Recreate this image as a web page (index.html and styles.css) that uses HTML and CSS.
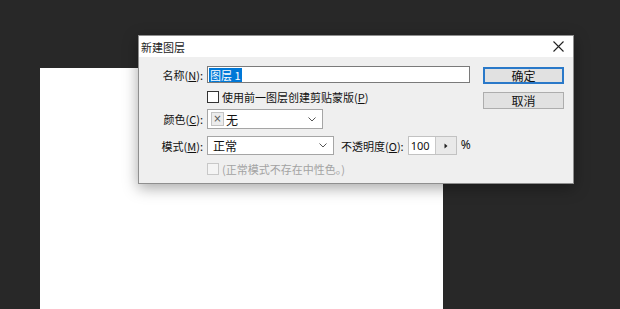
FILE: index.html
```html
<!DOCTYPE html>
<html lang="zh-CN">
<head>
  <meta charset="UTF-8">
  <meta name="viewport" content="width=device-width, initial-scale=1.0">
  <title>新建图层</title>
  <link rel="stylesheet" href="styles.css">
</head>
<body>
  <div class="workspace">
    <div class="canvas"></div>
  </div>

  <div class="dialog">
    <div class="title-bar">
      <span class="title">新建图层</span>
      <svg class="close" width="11" height="11" viewBox="0 0 11 11">
        <path d="M0.5 0.5 L10.5 10.5 M10.5 0.5 L0.5 10.5" stroke="#222" stroke-width="1.1" fill="none"/>
      </svg>
    </div>
    <div class="dialog-body">
      <div class="form">
        <div class="row row-name">
          <label class="label">名称(<u>N</u>):</label>
          <div class="text-input"><span class="selected">图层 1</span></div>
        </div>
        <div class="row row-clip">
          <span class="label"></span>
          <div class="check"><span class="box"></span>使用前一图层创建剪贴蒙版(<u>P</u>)</div>
        </div>
        <div class="row row-color">
          <label class="label">颜色(<u>C</u>):</label>
          <div class="select select-color">
            <span class="swatch">×</span><span class="value">无</span>
            <svg class="chevron" width="8" height="5" viewBox="0 0 8 5"><path d="M0.5 0.5 L4 4 L7.5 0.5" stroke="#555" fill="none"/></svg>
          </div>
        </div>
        <div class="row row-mode">
          <label class="label">模式(<u>M</u>):</label>
          <div class="select select-mode">
            <span class="value">正常</span>
            <svg class="chevron" width="8" height="5" viewBox="0 0 8 5"><path d="M0.5 0.5 L4 4 L7.5 0.5" stroke="#555" fill="none"/></svg>
          </div>
          <label class="opacity-label">不透明度(<u>O</u>):</label>
          <div class="number">
            <span class="number-value">100</span>
            <span class="number-arrow">
              <svg width="4" height="6" viewBox="0 0 4 6"><path d="M0.5 0.5 L3.5 3 L0.5 5.5 Z" fill="#222"/></svg>
            </span>
          </div>
          <span class="percent">%</span>
        </div>
        <div class="row row-neutral">
          <span class="label"></span>
          <div class="check disabled"><span class="box"></span>(正常模式不存在中性色。)</div>
        </div>
      </div>
      <div class="buttons">
        <button class="btn btn-default">确定</button>
        <button class="btn">取消</button>
      </div>
    </div>
  </div>
</body>
</html>
```

FILE: styles.css
```css
body {
  margin: 0;
  width: 620px;
  height: 309px;
  overflow: hidden;
  background: #282828;
  font-family: "Noto Sans CJK SC", "Noto Sans", sans-serif;
  font-size: 11px;
  color: #111;
  position: relative;
}
.workspace {
  padding: 68px 0 0 40px;
}
.canvas {
  width: 403px;
  height: 241px;
  background: #fff;
}

/* dialog floats over the document */
.dialog {
  position: absolute;
  left: 138px;
  top: 35px;
  width: 434px;
  border: 1px solid #8f8f8f;
  background: #efefef;
  box-shadow: 0 4px 14px rgba(0, 0, 0, 0.35);
}
.title-bar {
  height: 21px;
  background: #fff;
  display: flex;
  align-items: center;
  justify-content: space-between;
  padding: 0 9px 0 2px;
}
.title {
  font-size: 11px;
  color: #222;
}
.close {
  display: block;
}
.dialog-body {
  display: flex;
  height: 126px;
  box-sizing: border-box;
  padding-top: 9px;
}
.form {
  flex: 1;
  display: flex;
  flex-direction: column;
}
.row {
  display: flex;
  align-items: center;
}
.label {
  width: 64px;
  padding-right: 4px;
  text-align: right;
  white-space: nowrap;
  flex-shrink: 0;
}
u {
  text-decoration: underline;
  text-underline-offset: 1px;
}
.row-name { height: 17px; }
.row-clip { height: 18px; margin-top: 5px; }
.row-color { height: 20px; margin-top: 3px; }
.row-mode { height: 19px; margin-top: 7px; }
.row-neutral { height: 17px; margin-top: 5px; }

.text-input {
  width: 260px;
  height: 15px;
  border: 1px solid #7a7a7a;
  background: #fff;
  display: flex;
  align-items: center;
  padding-left: 1px;
}
.selected {
  background: #0078d7;
  color: #fff;
  line-height: 14px;
  padding: 0 1px;
}
.check {
  display: flex;
  align-items: center;
  white-space: nowrap;
}
.box {
  width: 10px;
  height: 10px;
  border: 1px solid #333;
  background: #fff;
  margin-right: 3px;
}
.check.disabled {
  color: #a3a3a3;
}
.check.disabled .box {
  border-color: #c8c8c8;
  background: #f4f4f4;
}
.select {
  height: 100%;
  box-sizing: border-box;
  border: 1px solid #a5a5a5;
  background: #fff;
  display: flex;
  align-items: center;
  padding: 0 6px 0 3px;
}
.select-color { width: 116px; }
.select-mode { width: 127px; padding-left: 5px; }
.select .value {
  flex: 1;
  font-size: 12px;
}
.swatch {
  width: 11px;
  height: 12px;
  border: 1px solid #c4c4c4;
  background: #ececec;
  color: #555;
  font-family: "DejaVu Sans", sans-serif;
  font-size: 10px;
  line-height: 12px;
  text-align: center;
  margin-right: 2px;
}
.chevron {
  display: block;
}
.opacity-label {
  margin-left: 7px;
  margin-right: 4px;
  white-space: nowrap;
}
.number {
  display: flex;
  height: 100%;
  box-sizing: border-box;
  border: 1px solid #c2c2c2;
  background: #fff;
}
.number-value {
  width: 26px;
  font-family: "Noto Sans", sans-serif;
  font-size: 11px;
  line-height: 17px;
  padding-left: 2px;
  box-sizing: border-box;
}
.number-arrow {
  width: 20px;
  border-left: 1px solid #c8c8c8;
  background: #e9e9e9;
  display: flex;
  align-items: center;
  justify-content: center;
}
.percent {
  margin-left: 4px;
  font-family: "Noto Sans", sans-serif;
  font-size: 12px;
  margin-top: -3px;
}
.buttons {
  width: 81px;
  margin-right: 9px;
  padding-top: 1px;
  display: flex;
  flex-direction: column;
  gap: 8px;
}
.btn {
  height: 17px;
  margin: 0;
  padding: 0;
  border: 1px solid #adadad;
  background: #e1e1e1;
  font-family: "Noto Sans CJK SC", sans-serif;
  font-size: 12px;
  color: #111;
  line-height: 14px;
}
.btn-default {
  border: 2px solid #2a79c9;
}
```
